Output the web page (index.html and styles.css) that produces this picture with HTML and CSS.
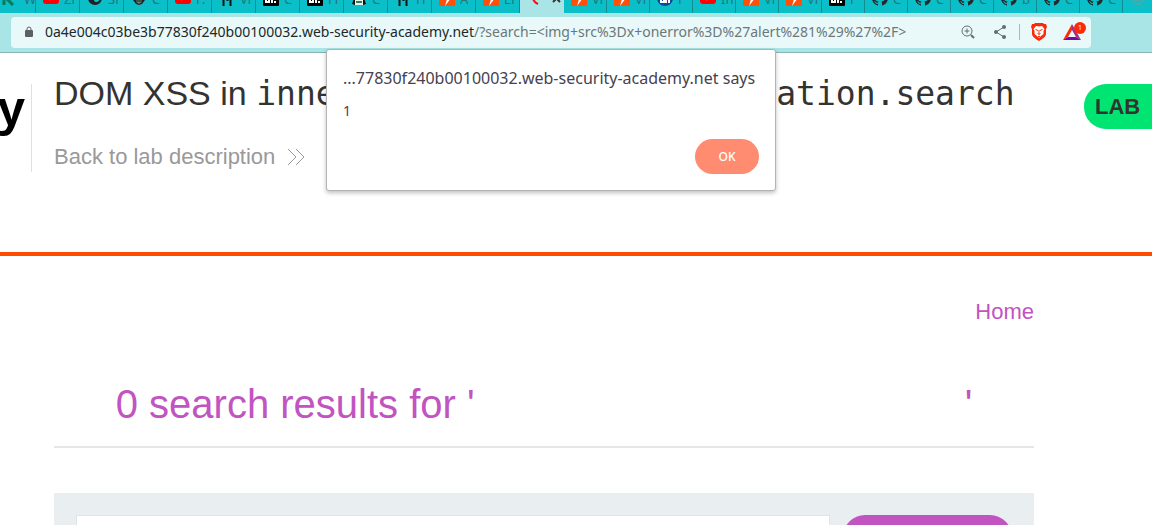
FILE: index.html
```html
<!DOCTYPE html>
<html lang="en">
<head>
<meta charset="utf-8">
<title>DOM XSS in innerHTML sink using source location.search</title>
<link rel="stylesheet" href="styles.css">
</head>
<body>
<svg class="defs" aria-hidden="true">
  <symbol id="yt" viewBox="0 0 16 16"><rect y="2" width="16" height="12" rx="3" fill="#f00"/><path d="M6.500 5.500v5L11 8z" fill="#fff"/></symbol>
  <symbol id="globe" viewBox="0 0 16 16"><circle cx="8" cy="8" r="7" fill="#202124"/><path d="M3 8c3-1 5 0 5 2s3 1 4-1" stroke="#0bbfc8" stroke-width="2" fill="none"/></symbol>
  <symbol id="agent" viewBox="0 0 16 16"><path d="M2 4h12v6l-3 4-3 1-3-1-3-4z" fill="#222"/><path d="M5 9h6v3l-3 2-3-2z" fill="#5a8078"/><path d="M5 11h6" stroke="#222"/></symbol>
  <symbol id="arch" viewBox="0 0 16 16"><path d="M2 4h12M4 9h8M4.500 3v13M11.500 3v13M8.500 5v6" stroke="#111" stroke-width="2" fill="none"/></symbol>
  <symbol id="dark" viewBox="0 0 16 16"><rect width="16" height="16" rx="1" fill="#000"/><path d="M3 9v3h3V9M9 9v4M11 12h2" stroke="#fff" stroke-width="2" fill="none"/></symbol>
  <symbol id="figure" viewBox="0 0 16 16"><path d="M4 5h8l3 9-3 1H4l-3-1z" fill="#111"/><path d="M4 9h8v6H4z" fill="#e8f3ef"/><path d="M5 12h6" stroke="#357b57" stroke-width="2"/></symbol>
  <symbol id="bolt" viewBox="0 0 16 16"><path d="M0 0h16v16H0z" fill="#ff4f08"/><path d="M8 1L3 9h5l-2 7 6-8H8l2-7z" fill="#fff"/></symbol>
  <symbol id="round" viewBox="0 0 16 16"><circle cx="8" cy="8" r="8" fill="#11489e"/><path d="M4 12V9h3v3zM9 13V9h3v4" stroke="#fff" stroke-width="2" fill="none"/></symbol>
  <symbol id="cat" viewBox="0 0 16 16"><path d="M8 0a8 8 0 0 0-2.500 15.600c.4.1.5-.2.5-.4v-1.400c-2.200.5-2.700-1-2.700-1-.4-.9-.9-1.200-.9-1.200-.7-.5.1-.5.1-.5.8.1 1.200.8 1.200.8.7 1.300 1.900.9 2.300.7 0-.5.3-.9.5-1.100-1.800-.2-3.600-.9-3.600-4 0-.8.3-1.600.8-2.100-.1-.2-.4-1 .1-2.100 0 0 .7-.2 2.200.8a7.600 7.600 0 0 1 4 0c1.500-1 2.200-.8 2.200-.8.5 1.100.2 1.900.1 2.100.5.5.8 1.300.8 2.100 0 3.100-1.900 3.800-3.700 4 .3.2.6.7.6 1.500v2.200c0 .2.1.5.5.4A8 8 0 0 0 8 0z" fill="#24292f"/></symbol>
</svg>

<header class="browser">
  <nav class="tabs" aria-label="Tabs">
    <a class="tab tab-first" href="#"><svg viewBox="0 0 16 16"><path d="M4 2v13M13 15L6 8l6-6" stroke="#087a60" stroke-width="3" fill="none"/></svg><span>W</span></a>
    <a class="tab" href="#"><svg><use href="#yt"/></svg><span>Zi</span></a>
    <a class="tab" href="#"><svg><use href="#globe"/></svg><span>Si</span></a>
    <a class="tab" href="#"><svg><use href="#agent"/></svg><span>C</span></a>
    <a class="tab" href="#"><svg><use href="#yt"/></svg><span>F.</span></a>
    <a class="tab" href="#"><svg><use href="#arch"/></svg><span>Vi</span></a>
    <a class="tab" href="#"><svg><use href="#dark"/></svg><span>C</span></a>
    <a class="tab" href="#"><svg><use href="#dark"/></svg><span>Fi</span></a>
    <a class="tab" href="#"><svg><use href="#figure"/></svg><span>C</span></a>
    <a class="tab" href="#"><svg><use href="#arch"/></svg><span>H</span></a>
    <a class="tab" href="#"><svg><use href="#bolt"/></svg><span>A</span></a>
    <a class="tab" href="#"><svg><use href="#bolt"/></svg><span>Ei</span></a>
    <a class="tab tab-active" href="#"><svg viewBox="0 0 16 16"><path d="M6 6q-1 5 5 8" stroke="#e11" stroke-width="2" fill="none"/></svg><svg viewBox="0 0 16 16"><path d="M5 5l7 7M12 5l-7 7" stroke="#333" stroke-width="2"/></svg></a>
    <a class="tab tab-narrow" href="#"><svg><use href="#bolt"/></svg><span>Vi</span></a>
    <a class="tab tab-narrow" href="#"><svg><use href="#bolt"/></svg><span>Vi</span></a>
    <a class="tab tab-narrow" href="#"><svg><use href="#round"/></svg><span>F</span></a>
    <a class="tab tab-narrow" href="#"><svg><use href="#yt"/></svg><span>In</span></a>
    <a class="tab tab-narrow" href="#"><svg><use href="#bolt"/></svg><span>Vi</span></a>
    <a class="tab tab-narrow" href="#"><svg><use href="#bolt"/></svg><span>Vi</span></a>
    <a class="tab tab-narrow" href="#"><svg><use href="#dark"/></svg><span>F</span></a>
    <a class="tab tab-narrow" href="#"><svg><use href="#cat"/></svg><span>C</span></a>
    <a class="tab tab-narrow" href="#"><svg><use href="#cat"/></svg><span>C</span></a>
    <a class="tab tab-narrow" href="#"><svg><use href="#cat"/></svg><span>C</span></a>
    <a class="tab tab-narrow" href="#"><svg><use href="#cat"/></svg><span>b</span></a>
    <a class="tab tab-narrow" href="#"><svg><use href="#cat"/></svg><span>C</span></a>
    <a class="tab tab-narrow" href="#"><svg><use href="#cat"/></svg><span>C</span></a>
    <a class="tab tab-narrow" href="#"><svg viewBox="0 0 16 16"><circle cx="8" cy="8" r="6" fill="none" stroke="#55a6a8" stroke-width="2" stroke-dasharray="5 1"/><path d="M5 10l3 1 3-2" stroke="#55a6a8" fill="none"/></svg></a>
  </nav>
  <div class="toolbar">
    <div class="address">
      <svg class="lock" viewBox="0 0 8 12"><path d="M2 5V3a2 2 0 0 1 4 0v2" fill="none" stroke="#5b6068" stroke-width="1"/><rect y="4" width="8" height="7" rx="1" fill="#5b6068"/></svg>
      <div class="url"><span class="host">0a4e004c03be3b77830f240b00100032.web-security-academy.net</span>/?search=&lt;img+src%3Dx+onerror%3D%27alert%281%29%27%2F&gt;</div>
      <button class="tool" aria-label="Zoom"><svg width="16" height="16" viewBox="0 0 16 16" fill="none" stroke="#5f6d70"><circle cx="7" cy="7" r="5"/><path d="M11 11l3 3" stroke-width="2"/><path d="M4.500 7h5M7 4.500v5"/></svg></button>
      <button class="tool" aria-label="Share"><svg width="16" height="16" viewBox="0 0 16 16"><path d="M12 3L4 8l8 5" fill="none" stroke="#5f6d70"/><g fill="#5f6d70"><circle cx="12" cy="3" r="2"/><circle cx="4" cy="8" r="2"/><circle cx="12" cy="13" r="2"/></g></svg></button>
      <span class="divider"></span>
      <button class="tool brave" aria-label="Shields"><svg width="16" height="18" viewBox="0 0 16 18"><path d="M4 0h8l1 1h2l1 3-1 2v5c0 2-2 4-7 7-5-3-7-5-7-7V6L0 4l1-3h2z" fill="#fb2a07"/><path d="M5 3l3 .5L11 3l2.500 3-1 2v3L10 13l-2 2-2-2-2.500-2V8l-1-2z" fill="#fff"/><path d="M4.500 6.500l2.500 1M11.500 6.500L9 7.500M8 7v4M6.500 10.500L8 11.500l1.500-1M7 13.500h2" stroke="#fb2a07" fill="none"/></svg></button>
      <button class="tool rewards" aria-label="Rewards"><svg width="18" height="16" viewBox="0 0 18 16"><path d="M9 0L0 16l5-3 4-7z" fill="#ff2b00"/><path d="M9 0l9 16-5-3-4-7z" fill="#a0308c"/><path d="M0 16h18l-5-3H5z" fill="#7a089c"/></svg><span class="count">1</span></button>
    </div>
  </div>
</header>

<section class="lab-header">
  <div class="logo">y</div>
  <div class="lab-title">
    <h2>DOM XSS in <code>innerHTML</code> sink using source <code>location.search</code></h2>
    <a href="#">Back to lab description <svg width="18" height="18" viewBox="0 0 18 18"><path d="M1 1l8 8-8 8M9 1l8 8-8 8" fill="none" stroke="#999"/></svg></a>
  </div>
  <div class="status">LAB</div>
</section>

<main class="content">
  <nav class="home"><a href="#">Home</a></nav>
  <h1>0 search results for '<span class="term"></span>'</h1>
  <form class="search">
    <input type="text" aria-label="Search the blog">
    <button type="button" aria-label="Search"></button>
  </form>
</main>

<div class="dialog" role="alertdialog" aria-labelledby="dialog-title" aria-describedby="dialog-text">
  <h3 id="dialog-title">...77830f240b00100032.web-security-academy.net says</h3>
  <p id="dialog-text">1</p>
  <button type="button">OK</button>
</div>
</body>
</html>
```

FILE: styles.css
```css
* { box-sizing: border-box; }
body {
  margin: 0;
  height: 100vh;
  overflow: hidden;
  position: relative;
  background: #fff;
  color: #333332;
  font-family: "Liberation Sans", Arial, sans-serif;
}
h1, h2, h3, p { margin: 0; font-weight: 400; }
button { border: 0; padding: 0; background: none; font: inherit; }
a { color: inherit; text-decoration: none; }
.defs { display: none; }

/* Browser chrome */
.browser { font-family: "Noto Sans", sans-serif; }
.tabs {
  display: flex;
  height: 13px;
  overflow: hidden;
  background: #0abfc7;
}
.tab {
  flex: 0 0 44px;
  display: flex;
  align-items: flex-end;
  gap: 5px;
  padding: 0 0 7px 7px;
  border-right: 1px solid #128d94;
  overflow: hidden;
  font-size: 13px;
  line-height: 14px;
  color: #24767d;
}
.tab svg { flex: none; width: 16px; height: 16px; }
.tab span { width: 12px; overflow: hidden; white-space: nowrap; }
.tab-first { flex-basis: 36px; padding-left: 0; gap: 8px; }
.tab-narrow { flex-basis: 43px; }
.tab-active { background: #a9e5e6; border-right-color: #a9e5e6; }
.toolbar {
  padding: 4px 61px 4px 11px;
  background: #a9e5e6;
  border-bottom: 1px solid #86b5b8;
}
.address {
  display: flex;
  align-items: center;
  height: 31px;
  padding: 0 8px 1px 14px;
  border-radius: 4px;
  background: #e9f9f9;
}
.lock { width: 8px; height: 12px; margin-right: 12px; }
.url {
  flex: 1;
  font-size: 14px;
  line-height: 20px;
  white-space: nowrap;
  color: #6c7778;
}
.host { color: #202829; }
.tool { display: flex; margin-left: 16px; }
.divider { width: 1px; height: 16px; margin-left: 11px; background: #a9b8ba; }
.brave { margin-left: 11px; }
.rewards { position: relative; margin-right: 2px; }
.count {
  position: absolute;
  top: -2px;
  right: -5px;
  width: 12px;
  height: 12px;
  border-radius: 6px;
  background: #fb2a07;
  color: #fff;
  font-size: 7px;
  line-height: 12px;
  text-align: center;
}

/* Lab banner */
.lab-header {
  display: flex;
  align-items: flex-start;
  height: 203px;
  padding-top: 31px;
  border-bottom: 4px solid #ff4a00;
}
.logo {
  flex: 0 0 32px;
  min-width: 0;
  height: 88px;
  padding-right: 6px;
  display: flex;
  justify-content: flex-end;
  border-right: 1px solid #e0e0e0;
  color: #000;
  font-size: 50px;
  font-weight: 700;
  line-height: 50px;
}
.lab-title { flex: 1; padding-left: 22px; }
.lab-title h2 { font-size: 34px; line-height: 40px; margin-top: -11px; white-space: nowrap; }
.lab-title code { font-family: "DejaVu Sans Mono", monospace; font-size: 33px; line-height: 34px; }
.lab-title a {
  display: flex;
  align-items: center;
  gap: 12px;
  margin-top: 32px;
  color: #999;
  font-size: 22px;
  line-height: 24px;
}
.status {
  flex: 0 0 68px;
  padding-left: 11px;
  border-radius: 22px 0 0 22px;
  background: #00e571;
  font-size: 22px;
  font-weight: 700;
  line-height: 45px;
}

/* Results */
.content { margin: 0 118px 0 54px; color: #c154c1; }
.home { padding-top: 43px; text-align: right; font-size: 22px; line-height: 26px; }
.content h1 {
  padding: 56px 0 19px;
  border-bottom: 2px solid #e5e6e6;
  font-size: 40px;
  line-height: 46px;
  text-align: center;
  white-space: nowrap;
}
.term { display: inline-block; width: 50%; }
.search {
  display: flex;
  gap: 13px;
  margin-top: 45px;
  padding: 22px;
  background: #e9eef1;
}
.search input {
  flex: 1;
  height: 45px;
  border: 1px solid #dfe4e6;
  background: #fff;
  font: inherit;
}
.search button {
  flex: 0 0 169px;
  border-radius: 22px;
  background: #c154c1;
}

/* Alert */
.dialog {
  position: absolute;
  top: 49px;
  left: 326px;
  width: 450px;
  padding: 17px 16px 16px;
  border: 1px solid #b3b3b3;
  border-radius: 3px;
  background: #fff;
  box-shadow: 0 2px 4px rgba(0, 0, 0, .25);
  color: #45414f;
  font-family: "Noto Sans", sans-serif;
}
.dialog h3 { font-size: 16px; line-height: 22px; white-space: nowrap; }
.dialog p { margin-top: 12px; font-size: 14px; line-height: 20px; }
.dialog button {
  display: block;
  width: 64px;
  height: 35px;
  margin: 18px 0 0 auto;
  border-radius: 18px;
  background: #ff8c70;
  color: #fff;
  font-size: 12px;
  font-weight: 500;
}
```
